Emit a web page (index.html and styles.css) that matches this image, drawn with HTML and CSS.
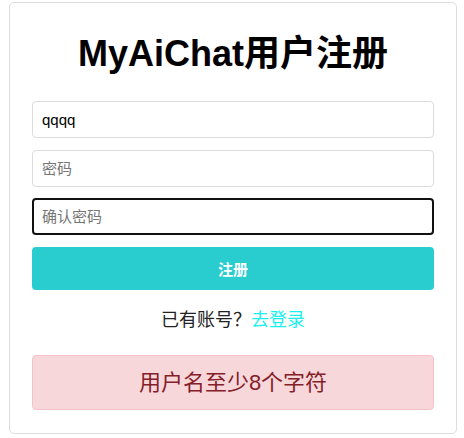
FILE: index.html
```html
<!DOCTYPE html>
<html lang="zh-CN">
<head>
<meta charset="utf-8">
<title>MyAiChat用户注册</title>
<link rel="stylesheet" href="styles.css">
</head>
<body>
<div class="page">
  <div class="card">
    <h1 class="title">MyAiChat用户注册</h1>
    <form class="form">
      <input class="field" type="text" value="qqqq">
      <input class="field" type="password" placeholder="密码">
      <input class="field focused" type="password" placeholder="确认密码">
      <button class="submit" type="button">注册</button>
    </form>
    <p class="switch">已有账号？<a class="link" href="#">去登录</a></p>
    <div class="error">用户名至少8个字符</div>
  </div>
</div>
</body>
</html>
```
FILE: styles.css
```css
html, body {
  margin: 0;
  padding: 0;
  background: #fff;
}
body {
  font-family: "Liberation Sans", "Noto Sans CJK SC", sans-serif;
  color: #000;
}
.page {
  padding: 2px 8px 0 9px;
}
.card {
  box-sizing: border-box;
  width: 448px;
  height: 432px;
  border: 1px solid #ddd;
  border-radius: 5px;
  padding: 22px;
}
.title {
  margin: 7px 0 25px;
  font-size: 36px;
  line-height: 44px;
  font-weight: bold;
  text-align: center;
}
.form {
  display: flex;
  flex-direction: column;
  gap: 11.5px;
  margin: 0;
}
.field {
  box-sizing: border-box;
  width: 100%;
  height: 37px;
  margin: 0;
  border: 1px solid #dcdcdc;
  border-radius: 4px;
  padding: 0 9px;
  font-family: "Liberation Sans", "Noto Sans CJK SC", sans-serif;
  font-size: 15px;
  color: #000;
  outline: none;
  background: #fff;
}
.field::placeholder {
  color: #767676;
}
.field.focused {
  border: 2px solid #111;
  padding: 0 8px;
}
.submit {
  box-sizing: border-box;
  width: 100%;
  height: 43px;
  margin: 0;
  border: none;
  border-radius: 4px;
  background: #29cdd0;
  color: #fff;
  font-family: "Liberation Sans", "Noto Sans CJK SC", sans-serif;
  font-size: 15px;
  font-weight: bold;
}
.switch {
  margin: 17.5px 0 22px;
  font-size: 18px;
  line-height: 26px;
  text-align: center;
  color: #222;
}
.link {
  color: #1af0f0;
  text-decoration: none;
}
.error {
  box-sizing: border-box;
  height: 55px;
  border: 1px solid #f5c2c7;
  border-radius: 4px;
  background: #f8d7da;
  color: #842029;
  font-size: 22px;
  line-height: 53px;
  text-align: center;
}
```
